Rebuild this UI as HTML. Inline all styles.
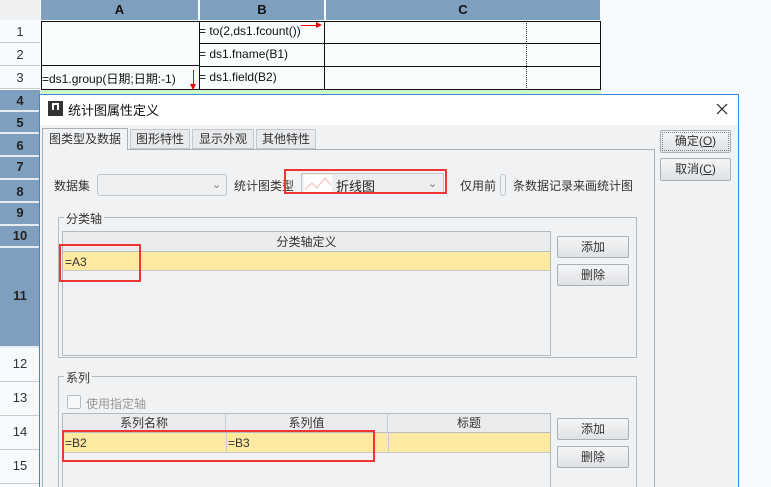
<!DOCTYPE html>
<html style="width:771px;height:487px;overflow:hidden"><head><meta charset="utf-8"><style>
*{margin:0;padding:0;box-sizing:border-box}
body{width:771px;height:487px;overflow:hidden;background:#f7fbfd;font-family:"Liberation Sans","Noto Sans CJK SC",sans-serif;font-size:12px;color:#333;position:relative}
.a{position:absolute}
.ch{background:#7f9fbf;color:#111;font-weight:bold;text-align:center;line-height:20px;height:20px;top:0;font-size:13px}
.rh{left:0;width:40px;text-align:center;font-weight:bold;color:#222;border-bottom:2px solid #e8ecef;background:#7f9fbf;font-size:13px}
.rw{left:0;width:40px;text-align:center;color:#333;background:#f7fbfd;border-bottom:1px solid #ccc;font-size:13px}
.btn{background:linear-gradient(#f4f5f6,#dfe2e5);border:1px solid #a9b0b6;border-radius:2px;text-align:center;color:#333;font-size:12px}
.yl{background:#fde9a0}
.red{border:2px solid #f03535}
.th{background:#eaeced;border-bottom:1px solid #b8bec3;text-align:center;color:#333;line-height:20px}
</style></head><body>
<div class="a" style="left:0;top:0;width:40px;height:20px;background:#eef0f2"></div>
<div class="a ch" style="left:41px;width:157px">A</div>
<div class="a ch" style="left:200px;width:124px">B</div>
<div class="a ch" style="left:326px;width:274px">C</div>
<div class="a rw" style="top:21px;height:22px;line-height:22px">1</div>
<div class="a rw" style="top:43px;height:23px;line-height:23px">2</div>
<div class="a rw" style="top:66px;height:23px;line-height:23px">3</div>
<div class="a" style="left:41px;top:21px;width:560px;height:69px;border:1px solid #111;background:#f9fdfd"></div>
<div class="a" style="left:41px;top:65px;width:159px;border-top:1px solid #111"></div>
<div class="a" style="left:199px;top:43px;width:401px;border-top:1px solid #111"></div>
<div class="a" style="left:199px;top:66px;width:401px;border-top:1px solid #111"></div>
<div class="a" style="left:199px;top:21px;height:69px;border-left:1px solid #111"></div>
<div class="a" style="left:324px;top:21px;height:69px;border-left:1px solid #111"></div>
<div class="a" style="left:526px;top:21px;height:73px;border-left:1px dotted #333"></div>
<div class="a" style="left:199px;top:24px;color:#111">= to(2,ds1.fcount())</div>
<div class="a" style="left:199px;top:47px;color:#111">= ds1.fname(B1)</div>
<div class="a" style="left:199px;top:70px;color:#111">= ds1.field(B2)</div>
<div class="a" style="left:42px;top:70px;color:#111">=ds1.group(日期;日期:-1)</div>
<div class="a" style="left:301px;top:25px;width:18px;border-top:1px solid #e00"></div>
<div class="a" style="left:316px;top:22px;width:0;height:0;border-left:6px solid #e00;border-top:3px solid transparent;border-bottom:3px solid transparent"></div>
<div class="a" style="left:193px;top:70px;height:16px;border-left:1px solid #e00"></div>
<div class="a" style="left:190px;top:84px;border-top:6px solid #e00;border-left:3px solid transparent;border-right:3px solid transparent"></div>
<div class="a" style="left:41px;top:90px;width:560px;height:4px;background:#ccf8c8"></div>
<div class="a rh" style="top:90px;height:22px;line-height:22px">4</div>
<div class="a rh" style="top:112px;height:22px;line-height:22px">5</div>
<div class="a rh" style="top:134px;height:23px;line-height:23px">6</div>
<div class="a rh" style="top:157px;height:23px;line-height:20px">7</div>
<div class="a rh" style="top:180px;height:23px;line-height:23px">8</div>
<div class="a rh" style="top:203px;height:23px;line-height:20px">9</div>
<div class="a rh" style="top:226px;height:22px;line-height:20px">10</div>
<div class="a rh" style="top:248px;height:100px;line-height:96px">11</div>
<div class="a rw" style="top:348px;height:34px;line-height:32px">12</div>
<div class="a rw" style="top:382px;height:34px;line-height:32px">13</div>
<div class="a rw" style="top:416px;height:34px;line-height:32px">14</div>
<div class="a rw" style="top:450px;height:34px;line-height:32px">15</div>
<div class="a" style="left:39px;top:94px;width:700px;height:400px;border:1px solid #3b86d6;background:#f1f2f3"></div>
<div class="a" style="left:40px;top:95px;width:698px;height:30px;background:#fff"></div>
<div class="a" style="left:48px;top:101px;width:15px;height:15px;background:#333"></div>
<div class="a" style="left:52px;top:103px;width:7px;height:7px;border:2px solid #fff;border-bottom:none"></div>
<div class="a" style="left:68px;top:100px;font-size:13px;color:#111">统计图属性定义</div>
<svg class="a" style="left:716px;top:103px" width="12" height="12"><path d="M1 1L11 11M11 1L1 11" stroke="#222" stroke-width="1.2"/></svg>
<div class="a" style="left:42px;top:149px;width:613px;height:340px;border:1px solid #aab0b5;border-bottom:none"></div>
<div class="a" style="left:42px;top:128px;width:86px;height:22px;border:1px solid #aab0b5;border-bottom:none;background:#f1f2f3;text-align:center;line-height:20px;color:#333">图类型及数据</div>
<div class="a" style="left:130px;top:129px;width:60px;height:20px;border:1px solid #c4c8cc;background:#e8eaeb;text-align:center;line-height:18px">图形特性</div>
<div class="a" style="left:192px;top:129px;width:62px;height:20px;border:1px solid #c4c8cc;background:#e8eaeb;text-align:center;line-height:18px">显示外观</div>
<div class="a" style="left:256px;top:129px;width:60px;height:20px;border:1px solid #c4c8cc;background:#e8eaeb;text-align:center;line-height:18px">其他特性</div>
<div class="a btn" style="left:660px;top:130px;width:71px;height:23px;line-height:21px;outline:1px dotted #888;outline-offset:-3px">确定(<u>O</u>)</div>
<div class="a btn" style="left:660px;top:158px;width:71px;height:23px;line-height:21px">取消(<u>C</u>)</div>
<div class="a" style="left:54px;top:177px">数据集</div>
<div class="a" style="left:97px;top:174px;width:130px;height:22px;border:1px solid #c0c5ca;border-radius:3px;background:#eef0f2"></div>
<div class="a" style="left:212px;top:178px;color:#777;font-size:11px">⌄</div>
<div class="a" style="left:234px;top:177px">统计图类型</div>
<div class="a" style="left:301px;top:173px;width:143px;height:21px;border:1px solid #c0c5ca;background:#eceef0"></div>
<div class="a" style="left:304px;top:175px;width:28px;height:17px;background:#fff"></div>
<svg class="a" style="left:304px;top:175px" width="28" height="17"><polyline points="1,14 8,8 13,13 21,3 27,10" fill="none" stroke="#f5b5b5" stroke-width="1"/></svg>
<div class="a" style="left:336px;top:176px;font-size:13px;color:#222">折线图</div>
<div class="a" style="left:428px;top:177px;color:#777;font-size:11px">⌄</div>
<div class="a red" style="left:284px;top:169px;width:163px;height:25px"></div>
<div class="a" style="left:460px;top:177px">仅用前</div>
<div class="a" style="left:500px;top:174px;width:6px;height:22px;border:1px solid #c0c5ca;border-radius:3px"></div>
<div class="a" style="left:513px;top:177px">条数据记录来画统计图</div>
<div class="a" style="left:58px;top:217px;width:579px;height:141px;border:1px solid #b5babf"></div>
<div class="a" style="left:64px;top:210px;background:#f1f2f3;padding:0 2px">分类轴</div>
<div class="a" style="left:62px;top:231px;width:489px;height:125px;border:1px solid #b5babf;background:#f1f2f3"></div>
<div class="a th" style="left:63px;top:232px;width:487px;height:20px">分类轴定义</div>
<div class="a yl" style="left:63px;top:252px;width:487px;height:19px;border-bottom:1px solid #c8c8c8"></div>
<div class="a" style="left:65px;top:255px;color:#333">=A3</div>
<div class="a red" style="left:59px;top:244px;width:82px;height:38px"></div>
<div class="a btn" style="left:557px;top:236px;width:72px;height:22px;line-height:20px">添加</div>
<div class="a btn" style="left:557px;top:264px;width:72px;height:22px;line-height:20px">删除</div>
<div class="a" style="left:58px;top:376px;width:579px;height:120px;border:1px solid #b5babf"></div>
<div class="a" style="left:64px;top:369px;background:#f1f2f3;padding:0 2px">系列</div>
<div class="a" style="left:67px;top:395px;width:14px;height:14px;border:1px solid #b8bcc0;border-radius:2px;background:#f7f8f9"></div>
<div class="a" style="left:86px;top:395px;color:#999">使用指定轴</div>
<div class="a" style="left:62px;top:413px;width:489px;height:80px;border:1px solid #b5babf"></div>
<div class="a th" style="left:63px;top:414px;width:163px;height:19px;border-right:1px solid #c8ccd0;line-height:19px">系列名称</div>
<div class="a th" style="left:226px;top:414px;width:162px;height:19px;border-right:1px solid #c8ccd0;line-height:19px">系列值</div>
<div class="a th" style="left:388px;top:414px;width:162px;height:19px;line-height:19px">标题</div>
<div class="a yl" style="left:63px;top:433px;width:487px;height:20px;border-bottom:1px solid #c8c8c8"></div>
<div class="a" style="left:226px;top:433px;height:20px;border-left:1px solid #c8ccd0"></div>
<div class="a" style="left:388px;top:433px;height:20px;border-left:1px solid #c8ccd0"></div>
<div class="a" style="left:65px;top:436px">=B2</div>
<div class="a" style="left:228px;top:436px">=B3</div>
<div class="a red" style="left:62px;top:430px;width:313px;height:32px"></div>
<div class="a btn" style="left:557px;top:418px;width:72px;height:22px;line-height:20px">添加</div>
<div class="a btn" style="left:557px;top:446px;width:72px;height:22px;line-height:20px">删除</div>
</body></html>
